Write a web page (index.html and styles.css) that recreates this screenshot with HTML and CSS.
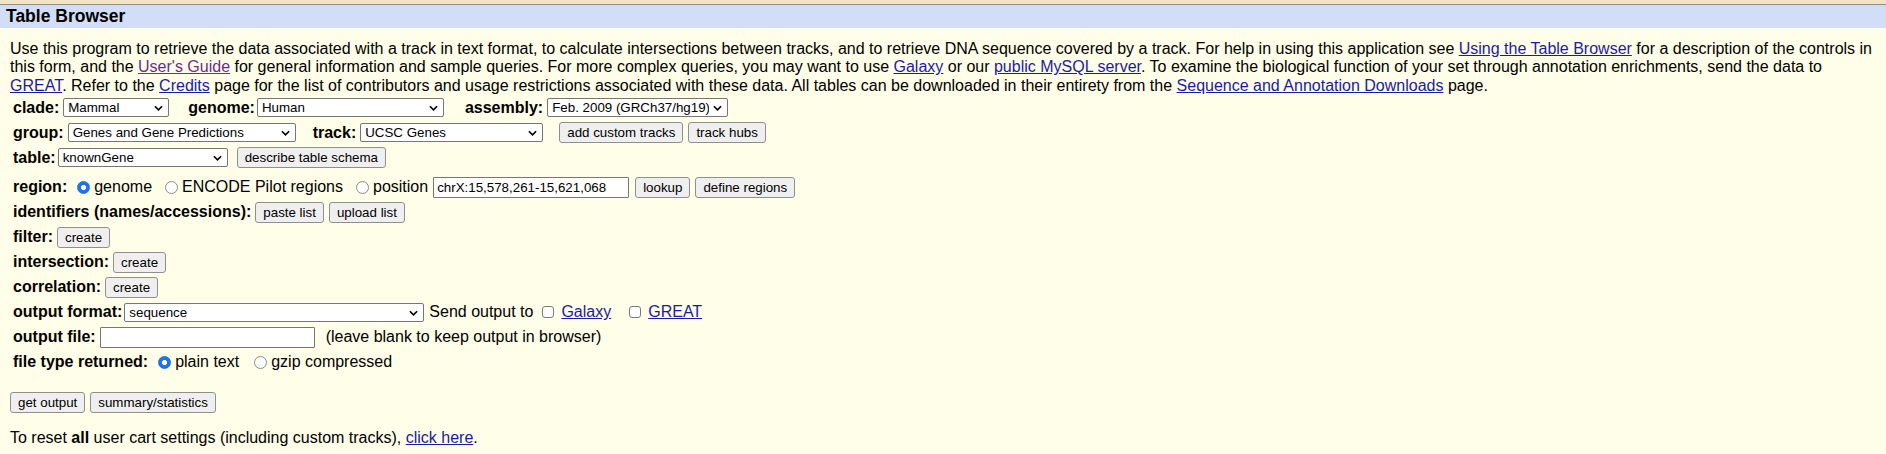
FILE: index.html
```html
<!DOCTYPE html>
<html lang="en">
<head>
<meta charset="utf-8">
<title>Table Browser</title>
<link rel="stylesheet" href="styles.css">
</head>
<body>
<div class="topstrip"></div>
<div class="header">Table Browser</div>
<div class="content">
  <p class="intro">Use this program to retrieve the data associated with a track in text format, to calculate intersections between tracks, and to retrieve DNA sequence covered by a track. For help in using this application see <a href="#">Using the Table Browser</a> for a description of the controls in this form, and the <a class="visited" href="#">User's Guide</a> for general information and sample queries. For more complex queries, you may want to use <a href="#">Galaxy</a> or our <a href="#">public MySQL server</a>. To examine the biological function of your set through annotation enrichments, send the data to <a href="#">GREAT</a>. Refer to the <a href="#">Credits</a> page for the list of contributors and usage restrictions associated with these data. All tables can be downloaded in their entirety from the <a href="#">Sequence and Annotation Downloads</a> page.</p>

  <div class="row">
    <b class="lbl">clade:</b>
    <span class="sel w-clade"><select><option>Mammal</option></select><svg class="chev" viewBox="0 0 10 6"><path d="M1 1l4 4 4-4"/></svg></span>
    <b class="lbl sep lbl-tight">genome:</b>
    <span class="sel w-genome"><select><option>Human</option></select><svg class="chev" viewBox="0 0 10 6"><path d="M1 1l4 4 4-4"/></svg></span>
    <b class="lbl sep sep-wide">assembly:</b>
    <span class="sel w-assembly"><select><option>Feb. 2009 (GRCh37/hg19)</option></select><svg class="chev" viewBox="0 0 10 6"><path d="M1 1l4 4 4-4"/></svg></span>
  </div>

  <div class="row">
    <b class="lbl">group:</b>
    <span class="sel w-group"><select><option>Genes and Gene Predictions</option></select><svg class="chev" viewBox="0 0 10 6"><path d="M1 1l4 4 4-4"/></svg></span>
    <b class="lbl sep sep-narrow">track:</b>
    <span class="sel w-track"><select><option>UCSC Genes</option></select><svg class="chev" viewBox="0 0 10 6"><path d="M1 1l4 4 4-4"/></svg></span>
    <button class="btn sep">add custom tracks</button>
    <button class="btn">track hubs</button>
  </div>

  <div class="row">
    <b class="lbl lbl-tight">table:</b>
    <span class="sel w-table"><select><option>knownGene</option></select><svg class="chev" viewBox="0 0 10 6"><path d="M1 1l4 4 4-4"/></svg></span>
    <button class="btn sep-s">describe table schema</button>
  </div>

  <div class="row row-gap">
    <b class="lbl">region:</b>
    <label class="opt"><input type="radio" name="region" class="radio" checked><span>genome</span></label>
    <label class="opt"><input type="radio" name="region" class="radio"><span>ENCODE Pilot regions</span></label>
    <label class="opt"><input type="radio" name="region" class="radio"><span>position</span></label>
    <input type="text" class="txt w-pos" value="chrX:15,578,261-15,621,068">
    <button class="btn">lookup</button>
    <button class="btn">define regions</button>
  </div>

  <div class="row">
    <b class="lbl">identifiers (names/accessions):</b>
    <button class="btn">paste list</button>
    <button class="btn">upload list</button>
  </div>

  <div class="row">
    <b class="lbl">filter:</b>
    <button class="btn">create</button>
  </div>

  <div class="row">
    <b class="lbl">intersection:</b>
    <button class="btn">create</button>
  </div>

  <div class="row">
    <b class="lbl">correlation:</b>
    <button class="btn">create</button>
  </div>

  <div class="row">
    <b class="lbl lbl-tight">output format:</b>
    <span class="sel w-output"><select><option>sequence</option></select><svg class="chev" viewBox="0 0 10 6"><path d="M1 1l4 4 4-4"/></svg></span>
    <span class="plain">Send output to</span>
    <label class="chk-opt"><input type="checkbox" class="check"><a href="#">Galaxy</a></label>
    <label class="chk-opt"><input type="checkbox" class="check"><a href="#">GREAT</a></label>
  </div>

  <div class="row">
    <b class="lbl">output file:</b>
    <input type="text" class="txt w-file" value="">
    <span class="note">(leave blank to keep output in browser)</span>
  </div>

  <div class="row">
    <b class="lbl">file type returned:</b>
    <label class="opt"><input type="radio" name="ftype" class="radio" checked><span>plain text</span></label>
    <label class="opt opt-wide"><input type="radio" name="ftype" class="radio"><span>gzip compressed</span></label>
  </div>

  <div class="actions">
    <button class="btn">get output</button>
    <button class="btn">summary/statistics</button>
  </div>

  <p class="reset">To reset <b>all</b> user cart settings (including custom tracks), <a href="#">click here</a>.</p>
</div>
</body>
</html>
```

FILE: styles.css
```css
* { box-sizing: border-box; }

body {
  margin: 0;
  background: #FFFEE8;
  color: #000;
  font-family: "Liberation Sans", Arial, sans-serif;
  font-size: 16px;
}

a { color: #1a1aa6; text-decoration: underline; }
a.visited { color: #6b2c91; }

.topstrip {
  height: 5px;
  background: #F3E4C1;
  border-bottom: 1px solid #8d8d8d;
}

.header {
  height: 23px;
  background: #D1DEF6;
  padding-left: 6px;
  font-weight: bold;
  font-size: 17.5px;
  line-height: 23px;
}

.content {
  padding: 12px 10px 0 10px;
}

.intro {
  margin: 0;
  line-height: 18.4px;
}

.row {
  display: flex;
  align-items: center;
  height: 25px;
  padding-left: 3px;
  white-space: nowrap;
}

.row-gap { margin-top: 4.5px; }

.lbl {
  font-weight: bold;
  margin-right: 4px;
}

.lbl-tight { margin-right: 2px; }

.sep { margin-left: 19px; }
.sep-wide { margin-left: 21px; }
.sep-narrow { margin-left: 17px; }

.sel {
  position: relative;
  display: inline-flex;
  height: 19px;
}

.sel select {
  appearance: none;
  -webkit-appearance: none;
  width: 100%;
  height: 19px;
  margin: 0;
  padding: 0 18px 0 4px;
  border: 1px solid #767676;
  border-radius: 2px;
  background: #fff;
  color: #000;
  font-family: "Liberation Sans", Arial, sans-serif;
  font-size: 13.33px;
  line-height: 17px;
}

.chev {
  position: absolute;
  right: 6px;
  top: 7px;
  width: 9px;
  height: 6px;
  fill: none;
  stroke: #000;
  stroke-width: 1.8;
  pointer-events: none;
}

.w-clade { width: 106px; }
.w-genome { width: 187px; }
.w-assembly { width: 181px; }
.w-group { width: 228px; }
.w-track { width: 183px; }
.w-table { width: 170px; }
.w-output { width: 300px; }

.btn {
  height: 21px;
  margin: 0 5px 0 0;
  padding: 0 7px;
  border: 1px solid #8f8f8f;
  border-radius: 3px;
  background: #efefef;
  color: #000;
  font-family: "Liberation Sans", Arial, sans-serif;
  font-size: 13.33px;
  line-height: 19px;
}

.btn.sep { margin-left: 16px; }
.btn.sep-s { margin-left: 9px; }

.txt {
  height: 21px;
  margin: 0 6px 0 0;
  padding: 1px 3px;
  border: 1px solid #767676;
  border-radius: 1px;
  background: #fff;
  font-family: "Liberation Sans", Arial, sans-serif;
  font-size: 13.33px;
}

.w-pos { width: 196px; margin-left: 5px; }
.w-file { width: 215px; margin-right: 11px; }

.opt {
  display: inline-flex;
  align-items: center;
  margin-left: 8px;
}

.lbl + .opt { margin-left: 1px; }
.opt-wide { margin-left: 10px; }

.radio {
  appearance: none;
  -webkit-appearance: none;
  width: 13px;
  height: 13px;
  margin: 0 4px 0 5px;
  border: 1px solid #8a8a8a;
  border-radius: 50%;
  background: #fff;
}

.radio:checked {
  border-color: #1a6ee8;
  background: radial-gradient(circle, #fff 0 2.3px, #1f74ee 2.8px);
}

.chk-opt {
  display: inline-flex;
  align-items: center;
  margin-right: 9px;
}

.check {
  appearance: none;
  -webkit-appearance: none;
  width: 12px;
  height: 12px;
  margin: 0 7px 0 9px;
  border: 1px solid #7a7a7a;
  border-radius: 3px;
  background: #fff;
}

.plain { margin-left: 5px; }

.actions {
  display: flex;
  align-items: center;
  height: 22px;
  margin-top: 16.5px;
}

.reset {
  margin: 16px 0 0 0;
  line-height: 18.4px;
}
```
